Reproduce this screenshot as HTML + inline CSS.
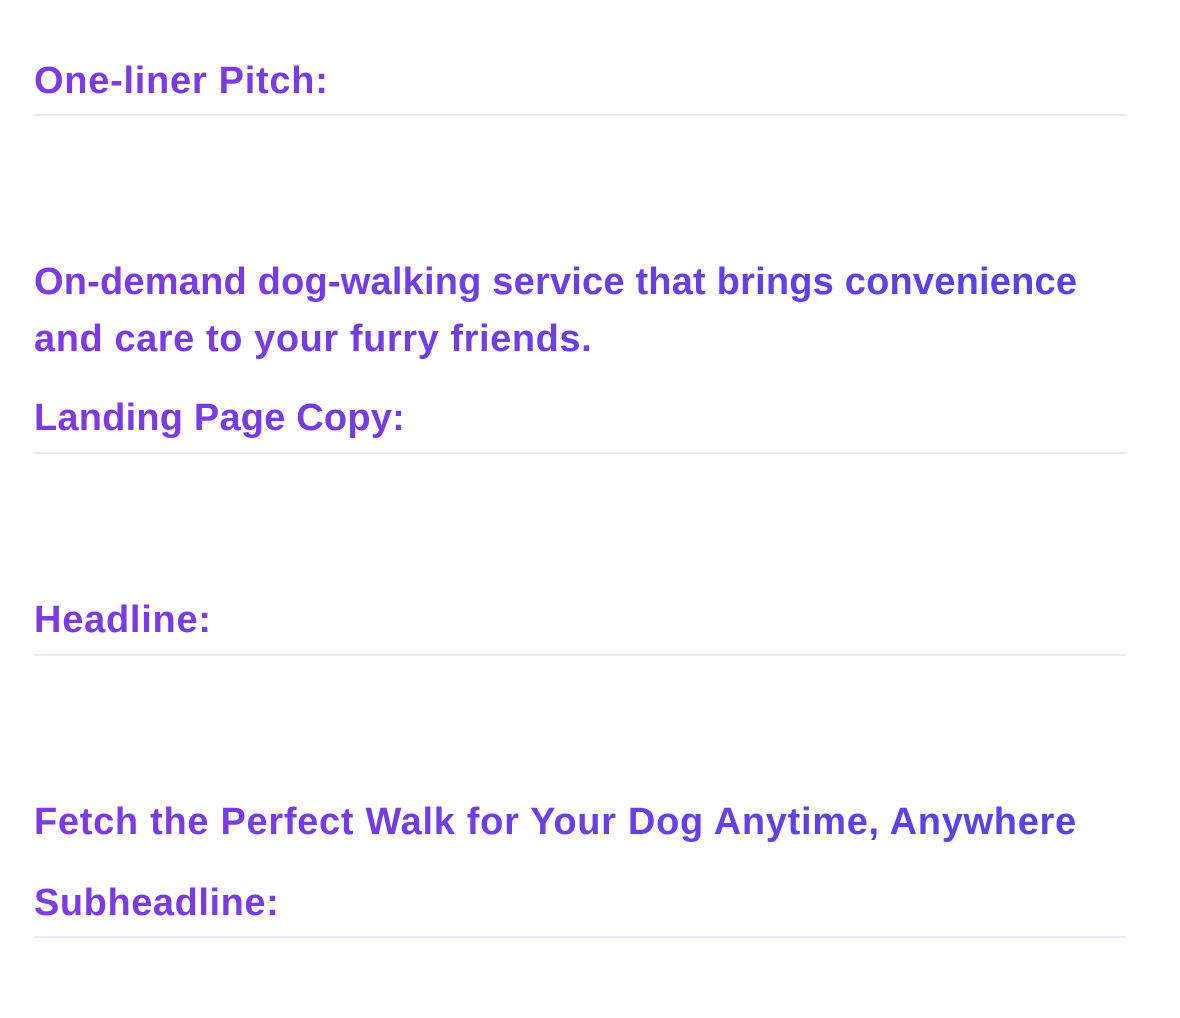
<!DOCTYPE html>
<html><head><meta charset="utf-8"><style>
html,body{margin:0;padding:0;background:#fff;width:1180px;height:1018px;overflow:hidden}
.t{position:absolute;left:34px;width:1092px;font-family:"Liberation Sans",sans-serif;font-weight:bold;font-size:38px;letter-spacing:0.2px;line-height:57px;white-space:nowrap;
background:linear-gradient(90deg,#7e3ae4 0%,#6d3ee6 50%,#5443e6 100%);-webkit-background-clip:text;background-clip:text;color:transparent}
.hr{position:absolute;left:34px;width:1092px;height:2px;background:#ede9fb}
</style></head><body>
<div class="t" style="top:53px;letter-spacing:0.73px">One-liner Pitch:</div>
<div class="hr" style="top:114px"></div>
<div class="t" style="top:254px">On-demand dog-walking service that brings convenience</div>
<div class="t" style="top:311px;letter-spacing:0.57px">and care to your furry friends.</div>
<div class="t" style="top:390px">Landing Page Copy:</div>
<div class="hr" style="top:452px"></div>
<div class="t" style="top:592px;letter-spacing:0.75px">Headline:</div>
<div class="hr" style="top:654px"></div>
<div class="t" style="top:794px;letter-spacing:0.7px">Fetch the Perfect Walk for Your Dog Anytime, Anywhere</div>
<div class="t" style="top:875px;letter-spacing:0.56px">Subheadline:</div>
<div class="hr" style="top:936px"></div>
</body></html>
